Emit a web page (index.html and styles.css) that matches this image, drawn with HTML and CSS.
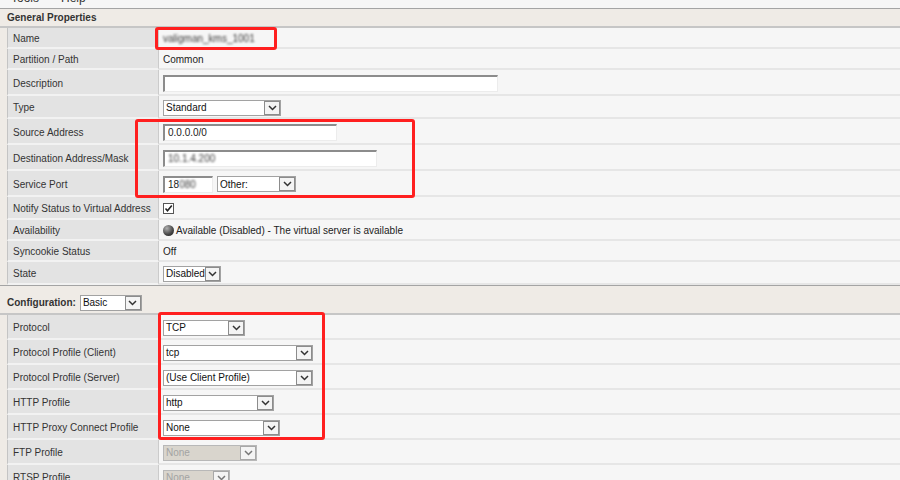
FILE: index.html
```html
<!DOCTYPE html>
<html lang="en">
<head>
    <meta charset="UTF-8">
    <title>Virtual Server Properties</title>
    <link rel="stylesheet" href="styles.css">
</head>
<body>
<div class="page">
    <div class="menubar"><span>Tools</span><span>Help</span></div>

    <!-- General Properties -->
    <div class="section-head">General Properties</div>
    <div class="props">
        <div class="row">
            <div class="label">Name</div>
            <div class="value"><span class="masked">valigman_kms_1001</span></div>
        </div>
        <div class="row">
            <div class="label">Partition / Path</div>
            <div class="value">Common</div>
        </div>
        <div class="row row-field">
            <div class="label">Description</div>
            <div class="value"><span class="input input-desc"></span></div>
        </div>
        <div class="row row-pick">
            <div class="label">Type</div>
            <div class="value">
                <span class="select sel-type"><span class="select-text">Standard</span><span class="select-btn"><svg viewBox="0 0 9 6"><path d="M1 1l3.5 3.5L8 1"/></svg></span></span>
            </div>
        </div>
        <div class="row row-field">
            <div class="label">Source Address</div>
            <div class="value"><span class="input input-addr">0.0.0.0/0</span></div>
        </div>
        <div class="row row-field">
            <div class="label">Destination Address/Mask</div>
            <div class="value"><span class="input input-mask"><span class="masked">10.1.4.200</span></span></div>
        </div>
        <div class="row row-field">
            <div class="label">Service Port</div>
            <div class="value">
                <span class="input input-port">18<span class="masked">080</span></span>
                <span class="select sel-other"><span class="select-text">Other:</span><span class="select-btn"><svg viewBox="0 0 9 6"><path d="M1 1l3.5 3.5L8 1"/></svg></span></span>
            </div>
        </div>
        <div class="row row-pick">
            <div class="label">Notify Status to Virtual Address</div>
            <div class="value">
                <svg class="checkbox" viewBox="0 0 11 11"><rect x="0.5" y="0.5" width="10" height="10" fill="#fff" stroke="#555"/><path d="M2.5 5.5l2 2.2L8.8 2.6" fill="none" stroke="#222" stroke-width="1.6"/></svg>
            </div>
        </div>
        <div class="row">
            <div class="label">Availability</div>
            <div class="value"><span class="status-ball"></span>Available (Disabled) - The virtual server is available</div>
        </div>
        <div class="row">
            <div class="label">Syncookie Status</div>
            <div class="value">Off</div>
        </div>
        <div class="row row-pick">
            <div class="label">State</div>
            <div class="value">
                <span class="select sel-state"><span class="select-text">Disabled</span><span class="select-btn"><svg viewBox="0 0 9 6"><path d="M1 1l3.5 3.5L8 1"/></svg></span></span>
            </div>
        </div>
    </div>

    <!-- Configuration -->
    <div class="section-head section-config">
        Configuration:
        <span class="select sel-basic"><span class="select-text">Basic</span><span class="select-btn"><svg viewBox="0 0 9 6"><path d="M1 1l3.5 3.5L8 1"/></svg></span></span>
    </div>
    <div class="props">
        <div class="row row-cfg">
            <div class="label">Protocol</div>
            <div class="value"><span class="select sel-proto"><span class="select-text">TCP</span><span class="select-btn"><svg viewBox="0 0 9 6"><path d="M1 1l3.5 3.5L8 1"/></svg></span></span></div>
        </div>
        <div class="row row-cfg">
            <div class="label">Protocol Profile (Client)</div>
            <div class="value"><span class="select sel-profile"><span class="select-text">tcp</span><span class="select-btn"><svg viewBox="0 0 9 6"><path d="M1 1l3.5 3.5L8 1"/></svg></span></span></div>
        </div>
        <div class="row row-cfg">
            <div class="label">Protocol Profile (Server)</div>
            <div class="value"><span class="select sel-profile"><span class="select-text">(Use Client Profile)</span><span class="select-btn"><svg viewBox="0 0 9 6"><path d="M1 1l3.5 3.5L8 1"/></svg></span></span></div>
        </div>
        <div class="row row-cfg">
            <div class="label">HTTP Profile</div>
            <div class="value"><span class="select sel-http"><span class="select-text">http</span><span class="select-btn"><svg viewBox="0 0 9 6"><path d="M1 1l3.5 3.5L8 1"/></svg></span></span></div>
        </div>
        <div class="row row-cfg">
            <div class="label">HTTP Proxy Connect Profile</div>
            <div class="value"><span class="select sel-proxy"><span class="select-text">None</span><span class="select-btn"><svg viewBox="0 0 9 6"><path d="M1 1l3.5 3.5L8 1"/></svg></span></span></div>
        </div>
        <div class="row row-cfg">
            <div class="label">FTP Profile</div>
            <div class="value"><span class="select select-disabled sel-ftp"><span class="select-text">None</span><span class="select-btn"><svg viewBox="0 0 9 6"><path d="M1 1l3.5 3.5L8 1"/></svg></span></span></div>
        </div>
        <div class="row row-cfg">
            <div class="label">RTSP Profile</div>
            <div class="value"><span class="select select-disabled sel-rtsp"><span class="select-text">None</span><span class="select-btn"><svg viewBox="0 0 9 6"><path d="M1 1l3.5 3.5L8 1"/></svg></span></span></div>
        </div>
    </div>

    <!-- red annotation boxes drawn over the screenshot -->
    <div class="mark mark-name"></div>
    <div class="mark mark-addr"></div>
    <div class="mark mark-proto"></div>
</div>
</body>
</html>
```

FILE: styles.css
```css
* {
    margin: 0;
    padding: 0;
    box-sizing: border-box;
}

body {
    font-family: "Liberation Sans", Arial, sans-serif;
    font-size: 10px;
    color: #222;
    background: #efebe6;
}

.page {
    position: relative;
    width: 900px;
    height: 480px;
    overflow: hidden;
}

.menubar {
    height: 8px;
    background: #f6f6f6;
    overflow: hidden;
    display: flex;
    gap: 22px;
    padding-left: 11px;
    font-size: 12px;
    line-height: 12px;
    color: #333;
}

.menubar span {
    margin-top: -8px;
}

.section-head {
    height: 20px;
    border-top: 1px solid #a4a4a4;
    border-bottom: 2px solid #c6c6c6;
    background: #efebe6;
    padding-left: 7px;
    display: flex;
    align-items: center;
    font-weight: bold;
    color: #333;
}

.section-config {
    height: 30px;
    gap: 4px;
    padding-top: 6px;
}

.section-config .select {
    font-weight: normal;
}

.props {
    margin-left: 7px;
}

.row {
    display: flex;
    height: 21px;
}

.row-field {
    height: 26px;
}

.row-pick {
    height: 23px;
}

.row-cfg {
    height: 25px;
}

.label {
    width: 152px;
    flex-shrink: 0;
    background: #e3e3e3;
    border-left: 1px solid #c4c4c4;
    border-right: 1px solid #cbcbcb;
    border-bottom: 2px solid #f2f2f2;
    padding: 2px 0 0 5px;
    display: flex;
    align-items: center;
    color: #333;
}

.value {
    flex: 1;
    background: #f6f6f6;
    border-bottom: 2px solid #e6e6e6;
    padding: 2px 0 0 4px;
    display: flex;
    align-items: center;
    gap: 4px;
    color: #222;
}

.masked {
    filter: blur(0.9px);
    color: #3a3a3a;
}

.input {
    height: 17px;
    background: #fff;
    border-style: solid;
    border-width: 2px 1px 1px 2px;
    border-color: #8c8c8c #ececec #ececec #8c8c8c;
    padding-left: 3px;
    display: flex;
    align-items: center;
}

.input-desc { width: 335px; }
.input-addr { width: 174px; }
.input-mask { width: 214px; }
.input-port { width: 50px; }

.select {
    height: 16px;
    background: #fff;
    border: 1px solid #a2a2a2;
    display: flex;
    align-items: center;
    justify-content: space-between;
    padding-left: 2px;
    color: #111;
}

.select-btn {
    width: 16px;
    height: 14px;
    border: 1px solid #8c8c8c;
    background: #f4f4f4;
    display: flex;
    align-items: center;
    justify-content: center;
}

.select-btn svg {
    width: 9px;
    height: 6px;
    fill: none;
    stroke: #333;
    stroke-width: 1.5;
}

.select-disabled {
    background: #d9d5cd;
    color: #a3a3a3;
    border-color: #b8b8b8;
}

.select-disabled .select-btn {
    border-color: #a8a8a8;
}

.select-disabled .select-btn svg {
    stroke: #777;
}

.sel-type { width: 118px; }
.sel-other { width: 79px; }
.sel-state { width: 58px; }
.sel-basic { width: 62px; }
.sel-proto { width: 82px; }
.sel-profile { width: 150px; }
.sel-http { width: 111px; }
.sel-proxy { width: 117px; }
.sel-ftp { width: 94px; }
.sel-rtsp { width: 67px; }

.checkbox {
    width: 11px;
    height: 11px;
}

.status-ball {
    width: 11px;
    height: 11px;
    border-radius: 50%;
    background: radial-gradient(circle at 35% 30%, #b0b0b0, #444 60%, #1a1a1a);
    margin-right: -2px;
}

.mark {
    position: absolute;
    border: 3px solid #ff1f1f;
    border-radius: 3px;
}

.mark-name {
    left: 155px;
    top: 27px;
    width: 122px;
    height: 23px;
}

.mark-addr {
    left: 135px;
    top: 119px;
    width: 280px;
    height: 79px;
}

.mark-proto {
    left: 158px;
    top: 312px;
    width: 167px;
    height: 128px;
}
```
